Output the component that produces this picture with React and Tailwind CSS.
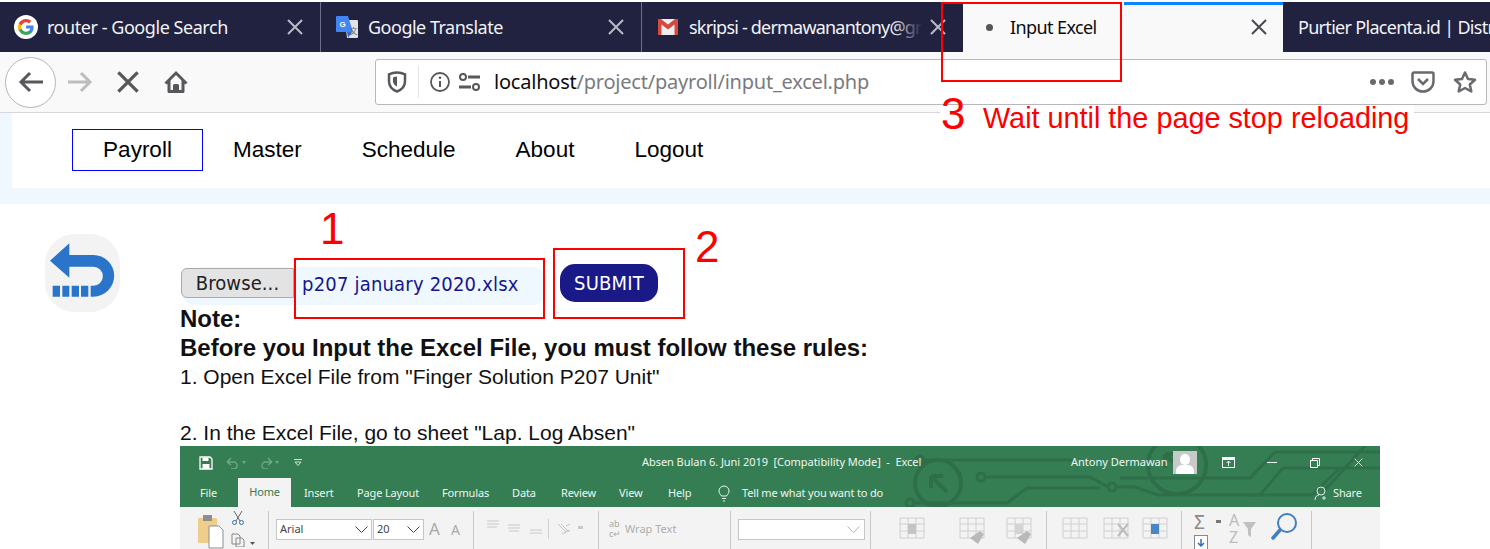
import React from "react";

const X = ({ c = "#b9bac6", s = 16, w = 2 }) => (
  <svg width={s} height={s} viewBox="0 0 16 16" className="shrink-0">
    <path d="M1 1L15 15M15 1L1 15" stroke={c} strokeWidth={w} fill="none" />
  </svg>
);

const GoogleG = () => (
  <svg width="24" height="24" viewBox="0 0 24 24" className="shrink-0">
    <circle cx="12" cy="12" r="12" fill="#fff" />
    <path d="M19.6 12.2c0-.6-.1-1.100-.2-1.600H12v3h4.300c-.2 1-.8 1.800-1.600 2.400v2h2.600c1.500-1.400 2.300-3.400 2.300-5.800z" fill="#4285f4" />
    <path d="M12 20c2.200 0 4-.7 5.300-2l-2.600-2c-.7.500-1.600.8-2.700.8-2.100 0-3.900-1.400-4.500-3.300H4.800v2.100C6.100 18.200 8.900 20 12 20z" fill="#34a853" />
    <path d="M7.500 13.500c-.3-1-.3-2 0-3V8.400H4.800c-1.100 2.200-1.100 5 0 7.200z" fill="#fbbc05" />
    <path d="M12 7.200c1.200 0 2.200.4 3.100 1.200l2.300-2.300C16 4.800 14.200 4 12 4 8.900 4 6.100 5.800 4.800 8.400l2.700 2.100c.6-1.900 2.400-3.300 4.500-3.300z" fill="#ea4335" />
  </svg>
);

const TranslateIcon = () => (
  <svg width="22" height="22" viewBox="0 0 22 22" className="shrink-0">
    <path d="M9 4h12a1 1 0 0 1 1 1v16a1 1 0 0 1-1 1H11z" fill="#e3e3e3" />
    <path d="M1 0h11l5 16H1a1 1 0 0 1-1-1V1a1 1 0 0 1 1-1z" fill="#4285f4" />
    <path d="M11 16l1 6 4-6z" fill="#3367d6" />
    <text x="3.500" y="11" fontSize="8" fontWeight="700" fill="#fff" fontFamily="'Liberation Sans', sans-serif">G</text>
    <text x="13.500" y="18" fontSize="8" fill="#666" fontFamily="'Noto Sans CJK SC', sans-serif">文</text>
  </svg>
);

const GmailIcon = () => (
  <svg width="20" height="16" viewBox="0 0 20 16" className="shrink-0">
    <rect width="20" height="16" fill="#eeeeee" />
    <path d="M0 0h3l7 5.500L17 0h3v16h-3.500V5.500L10 10.500 3.500 5.500V16H0z" fill="#d44a3e" />
  </svg>
);

function Tab({ w, icon, title, fade, divider, tracking = "tracking-[-0.5px]" }) {
  return (
    <div className={`relative flex items-center h-full shrink-0 ${w} ${divider ? "border-r border-[#6c6e86]" : ""}`}>
      <div className="ml-[14px] w-[24px] flex justify-center shrink-0">{icon}</div>
      <div className={`relative ml-[9px] flex-1 overflow-hidden whitespace-nowrap text-[18px] text-[#f2f3f7] ${tracking} pt-[1px]`}>
        {title}
        {fade && <div className="absolute right-0 top-0 h-full w-[30px] bg-gradient-to-r from-transparent to-[#20223f]" />}
      </div>
      <div className="ml-[8px] mr-[17px] shrink-0"><X /></div>
    </div>
  );
}

const ToolIcon = ({ children, w = 24, h = 24, className = "" }) => (
  <svg width={w} height={h} viewBox={`0 0 ${w} ${h}`} fill="none" className={`shrink-0 ${className}`}>{children}</svg>
);

function ExcelCircuit() {
  const c = "#2e6f4a";
  return (
    <svg width="480" height="61" viewBox="900 446 480 61" fill="none" className="absolute right-0 top-0" stroke={c} strokeWidth="3">
      <path d="M924 460H1075" />
      <circle cx="920" cy="460" r="4" />
      <circle cx="938" cy="483" r="23" strokeWidth="4" />
      <path d="M931 476h12M931 476v12M932 477l15 15" strokeWidth="4" />
      <circle cx="981" cy="477" r="4" />
      <path d="M985 477H1090L1108 487" />
      <circle cx="1112" cy="487" r="4" />
      <path d="M1116 487H1135L1158 495H1260L1283 468H1380" />
      <path d="M915 503H1007L1027 488H1100" />
      <circle cx="910" cy="503" r="4" />
      <circle cx="1177" cy="465" r="29" strokeWidth="4" />
      <path d="M1165 454h14M1165 454v14M1166 455l18 18" strokeWidth="4" />
      <path d="M1120 478H1250L1275 452H1380" />
      <path d="M1340 468L1312 495H1250M1365 446L1325 490" />
    </svg>
  );
}

function ExcelTitleRow() {
  return (
    <div className="flex items-center h-[33px] text-[11px] text-[#f1f6f3]">
      <ToolIcon w={14} h={14} className="ml-[19px]">
        <path d="M1 1h10l2 2v10H1z" stroke="#fff" strokeWidth="1.300" />
        <rect x="3.500" y="1.500" width="6" height="3.500" fill="#fff" />
        <rect x="3.500" y="8" width="7" height="5" fill="#fff" />
      </ToolIcon>
      <ToolIcon w={14} h={12} className="ml-[13px]">
        <path d="M1 5h8a4 4 0 0 1 0 7H5M1 5l4-4M1 5l4 3" stroke="#6da98a" strokeWidth="1.300" />
      </ToolIcon>
      <ToolIcon w={4} h={3} className="ml-[2px]"><path d="M0 0h4L2 3z" fill="#6da98a" /></ToolIcon>
      <ToolIcon w={14} h={12} className="ml-[13px]">
        <path d="M13 5H5a4 4 0 0 0 0 7h4M13 5L9 1M13 5L9 8" stroke="#6da98a" strokeWidth="1.300" />
      </ToolIcon>
      <ToolIcon w={4} h={3} className="ml-[2px]"><path d="M0 0h4L2 3z" fill="#6da98a" /></ToolIcon>
      <ToolIcon w={8} h={7} className="ml-[15px]"><path d="M0 .5h8M1 3h6L4 6.500z" stroke="#cfe0d6" strokeWidth="1" /></ToolIcon>
      <div className="ml-[340px] whitespace-pre w-[276px] tracking-[-0.05px]">Absen Bulan 6. Juni 2019  [Compatibility Mode]  -  Excel</div>
      <div className="ml-[153px] w-[93px] whitespace-nowrap">Antony Dermawan</div>
      <div className="ml-[9px] w-[24px] h-[23px] bg-[#c9c9c9] overflow-hidden relative">
        <div className="absolute left-[7px] top-[3px] w-[10px] h-[11px] rounded-full bg-white" />
        <div className="absolute left-[3px] top-[14px] w-[18px] h-[12px] rounded-t-[6px] bg-white" />
      </div>
      <ToolIcon w={13} h={11} className="ml-[25px]">
        <rect x=".5" y=".5" width="12" height="10" stroke="#fff" />
        <rect x="1" y="1" width="11" height="2" fill="#fff" />
        <path d="M6.500 9V4M4.500 6l2-2 2 2" stroke="#fff" />
      </ToolIcon>
      <div className="ml-[32px] w-[10px] h-[1px] bg-white" />
      <ToolIcon w={10} h={10} className="ml-[33px]">
        <path d="M.5 2.500h7v7h-7zM2.500 2.500v-2h7v7h-2" stroke="#fff" />
      </ToolIcon>
      <div className="ml-[34px]"><X c="#fff" s={9} w={1.300} /></div>
    </div>
  );
}

function ExcelTabs() {
  const items = [
    ["File", "ml-[20px] w-[18px]"],
    ["Insert", "ml-[13px] w-[28px]"],
    ["Page Layout", "ml-[25px] w-[60px]"],
    ["Formulas", "ml-[25px] w-[46px]"],
    ["Data", "ml-[24px] w-[24px]"],
    ["Review", "ml-[25px] w-[33px]"],
    ["View", "ml-[25px] w-[24px]"],
    ["Help", "ml-[25px] w-[22px]"],
  ];
  return (
    <div className="flex items-end h-[28px] text-[11px] tracking-[-0.15px] text-[#eef5f0]">
      <div className={`${items[0][1]} h-[28px] flex items-center whitespace-nowrap`}>File</div>
      <div className="ml-[20px] w-[53px] h-[29px] bg-[#f3f3f3] text-[#37794f] flex items-center justify-center">Home</div>
      {items.slice(1).map(([t, cls]) => (
        <div key={t} className={`${cls} h-[28px] flex items-center whitespace-nowrap`}>{t}</div>
      ))}
      <div className="h-[28px] flex items-center ml-[28px]">
        <ToolIcon w={12} h={17}>
          <path d="M3.500 11C2 9 1 8 1 6a5 5 0 0 1 10 0c0 2-1 3-2.500 5zM4 13.500h4M5 16h2" stroke="#eef5f0" />
        </ToolIcon>
      </div>
      <div className="h-[28px] flex items-center ml-[12px] w-[142px] whitespace-nowrap">Tell me what you want to do</div>
      <div className="h-[28px] flex items-center ml-[430px]">
        <ToolIcon w={14} h={15}>
          <circle cx="7" cy="5" r="4" stroke="#dfeae3" />
          <path d="M1 14c0-3 2-5 4-5M10 10v4M8 12h4" stroke="#dfeae3" />
        </ToolIcon>
      </div>
      <div className="h-[28px] flex items-center ml-[5px] whitespace-nowrap">Share</div>
    </div>
  );
}

const Sep = ({ ml }) => <div className={`${ml} w-[1px] h-[42px] bg-[#c8c8c8] shrink-0`} />;

const Grid = ({ accent, deleted, ins }) => (
  <ToolIcon w={28} h={30}>
    <path d="M2 2h24v20H2zM2 8h24M2 15h24M10 2v20M18 2v20" stroke="#d0d0d0" />
    {accent && <rect x="10" y="8" width="8" height="10" fill={accent} />}
    {ins && <path d="M12 22l8 6 6-10-4-3z" fill="#b9b9b9" />}
    {deleted && <path d="M16 8l10 12M26 8L16 20" stroke="#bbb" strokeWidth="2" />}
  </ToolIcon>
);

function ExcelRibbon() {
  return (
    <div className="flex items-start h-[42px] bg-[#f3f3f3] overflow-hidden text-[11px] text-[#666] pt-[4px]">
      <ToolIcon w={27} h={34} className="ml-[17px] mt-[4px]">
        <rect x="1" y="3" width="19" height="25" rx="1" fill="#efcd8b" />
        <rect x="6" y="0" width="9" height="6" fill="#8e8e8e" />
        <path d="M12 11h10l4 4v18H12z" fill="#fff" stroke="#8e8e8e" />
      </ToolIcon>
      <div className="ml-[7px] w-[14px] flex flex-col gap-[8px] shrink-0">
        <ToolIcon w={14} h={14}>
          <path d="M3 0l6 10M11 0L5 10" stroke="#666" />
          <circle cx="3.500" cy="11.500" r="2" stroke="#2a6fb5" />
          <circle cx="10.500" cy="11.500" r="2" stroke="#2a6fb5" />
        </ToolIcon>
        <ToolIcon w={14} h={14}>
          <path d="M1 1h6l2 2v8H1zM5 5h6l2 2v7H5z" stroke="#888" fill="#f3f3f3" />
        </ToolIcon>
      </div>
      <ToolIcon w={5} h={3} className="ml-[5px] mt-[31px]"><path d="M0 0h5L2.500 3z" fill="#555" /></ToolIcon>
      <Sep ml="ml-[13px]" />
      <div className="ml-[7px] mt-[8px] w-[96px] h-[21px] bg-white border border-[#c6c6c6] flex items-center justify-between pl-[3px] pr-[3px] text-[#444] shrink-0">
        Arial
        <ToolIcon w={13} h={7}><path d="M.5 .5l6 6 6-6" stroke="#444" /></ToolIcon>
      </div>
      <div className="ml-[1px] mt-[8px] w-[51px] h-[21px] bg-white border border-[#c6c6c6] flex items-center justify-between pl-[3px] pr-[3px] text-[#444] shrink-0">
        20
        <ToolIcon w={13} h={7}><path d="M.5 .5l6 6 6-6" stroke="#444" /></ToolIcon>
      </div>
      <div className="ml-[5px] mt-[7px] w-[16px] text-[17px] leading-[22px] text-[#a9a9a9]">A</div>
      <div className="ml-[6px] mt-[9px] w-[16px] text-[14px] leading-[20px] text-[#a9a9a9]">A</div>
      <Sep ml="ml-[6px]" />
      <ToolIcon w={56} h={16} className="ml-[12px] mt-[9px]">
        <path d="M1 1h12M1 4h12M1 7h10M22 5h12M22 8h12M23 11h10M44 10h12M44 13h12" stroke="#c9c9c9" />
      </ToolIcon>
      <div className="ml-[6px] mt-[8px] w-[1px] h-[20px] bg-[#d0d0d0]" />
      <ToolIcon w={14} h={12} className="ml-[8px] mt-[12px]">
        <path d="M1 1l8 8M4 1l8 8M9 3l4-2M5 11l8-4" stroke="#c2c2c2" />
      </ToolIcon>
      <div className="ml-[7px] mt-[15px] w-[5px] h-[3px] bg-[#c9c9c9] shrink-0" />
      <Sep ml="ml-[15px]" />
      <div className="ml-[10px] mt-[8px] w-[13px] text-[9px] leading-[10px] text-[#aaa]">ab<br />c↵</div>
      <div className="ml-[3px] w-[98px] flex flex-col shrink-0">
        <div className="mt-[10px] text-[#aeaeae] whitespace-nowrap">Wrap Text</div>
        <div className="mt-[12px] -ml-[23px] w-[121px] h-[2px] bg-[#c8c8c8]" />
      </div>
      <Sep ml="ml-[7px]" />
      <div className="ml-[7px] mt-[8px] w-[127px] h-[21px] bg-white border border-[#c6c6c6] flex items-center justify-end pr-[4px] shrink-0">
        <ToolIcon w={13} h={7}><path d="M.5 .5l6 6 6-6" stroke="#b5b5b5" /></ToolIcon>
      </div>
      <Sep ml="ml-[5px]" />
      <div className="ml-[27px] mt-[5px]"><Grid accent="#c4c4c4" /></div>
      <div className="ml-[32px] mt-[5px]"><Grid ins /></div>
      <div className="ml-[19px] mt-[5px]"><Grid accent="#d4d4d4" ins /></div>
      <Sep ml="ml-[13px]" />
      <div className="ml-[14px] mt-[5px]"><Grid /></div>
      <div className="ml-[13px] mt-[5px]"><Grid deleted /></div>
      <div className="ml-[11px] mt-[5px]"><Grid accent="#4a86c4" /></div>
      <Sep ml="ml-[12px]" />
      <div className="ml-[12px] flex flex-col w-[14px] shrink-0">
        <div className="text-[19px] leading-[22px] text-[#8a8a8a]">Σ</div>
        <ToolIcon w={14} h={16} className="mt-[2px]">
          <rect x=".5" y=".5" width="13" height="15" fill="#fff" stroke="#888" />
          <path d="M7 4v7M4 8l3 3 3-3" stroke="#2a6fb5" strokeWidth="1.500" />
        </ToolIcon>
      </div>
      <div className="ml-[8px] mt-[9px] w-[5px] h-[3px] bg-[#777] shrink-0" />
      <div className="ml-[8px] w-[12px] text-[16px] leading-[17px] text-[#bcbcbc] mt-[1px]">A<br />Z</div>
      <ToolIcon w={13} h={15} className="mt-[11px] ml-[2px]"><path d="M0 0h13L8 7v8L5 13V7z" fill="#c0c0c0" /></ToolIcon>
      <ToolIcon w={27} h={28} className="ml-[15px] mt-[1px]">
        <circle cx="16" cy="11" r="9" stroke="#3f7fc4" strokeWidth="2" />
        <path d="M9 18L2 26" stroke="#3f7fc4" strokeWidth="3.500" strokeLinecap="round" />
      </ToolIcon>
      <Sep ml="ml-[13px]" />
    </div>
  );
}

const Annot = ({ cls }) => <div className={`absolute border-2 border-[#ff0000] ${cls}`} />;

export default function App() {
  const nav = ["Master", "Schedule", "About", "Logout"];
  return (
    <div className="relative w-[1490px] h-[549px] overflow-hidden bg-white font-['Noto_Sans',sans-serif]">
      {/* tab strip */}
      <div className="h-[2px] bg-white" />
      <div className="flex h-[50px] bg-[#20223f] overflow-hidden">
        <Tab w="w-[321px]" icon={<GoogleG />} title="router - Google Search" divider tracking="tracking-[-0.45px]" />
        <Tab w="w-[321px]" icon={<TranslateIcon />} title="Google Translate" divider />
        <Tab w="w-[321px]" icon={<GmailIcon />} title="skripsi - dermawanantony@gmail.com" fade tracking="tracking-[-0.8px]" />
        <div className="relative w-[320px] h-full bg-[#f9f9fa] flex items-center shrink-0">
          <div className="absolute left-[161px] right-0 top-0 h-[3px] bg-[#0a84ff]" />
          <div className="ml-[23px] w-[7px] h-[7px] rounded-full bg-[#55565b]" />
          <div className="ml-[17px] flex-1 text-[18px] text-[#0c0c0d] tracking-[-0.6px] pt-[1px]">Input Excel</div>
          <div className="mr-[16px]"><X c="#4a4a4f" /></div>
        </div>
        <div className="ml-[15px] whitespace-nowrap self-center text-[18px] text-[#f2f3f7] tracking-[-0.7px] pt-[1px] shrink-0">Purtier Placenta.id | Distributor</div>
      </div>

      {/* toolbar */}
      <div className="flex items-center h-[61px] bg-[#f9f9fa] border-b border-[#d7d7db]">
        <div className="ml-[5px] w-[51px] h-[51px] rounded-full border border-[#b6b6b8] bg-white flex items-center justify-center shrink-0">
          <ToolIcon w={26} h={22}>
            <path d="M25 11H3M12 2L3 11l9 9" stroke="#58585c" strokeWidth="3" />
          </ToolIcon>
        </div>
        <ToolIcon w={26} h={22} className="ml-[11px]">
          <path d="M1 11h22M14 2l9 9-9 9" stroke="#bdbdbf" strokeWidth="3" />
        </ToolIcon>
        <div className="ml-[24px]"><X c="#58585c" s={22} w={2.400} /></div>
        <ToolIcon w={24} h={24} className="ml-[25px]">
          <path d="M12 1L.500 12.500 2.500 14.500 3.500 13.500V21.500A1.500 1.500 0 0 0 5 23H19a1.500 1.500 0 0 0 1.500-1.500V13.500l1 1 2-2zM6.500 10.500L12 5l5.500 5.500V20H15V15.500A1.500 1.500 0 0 0 13.500 14h-3A1.500 1.500 0 0 0 9 15.500V20H6.500z" fill="#58585c" />
        </ToolIcon>
        <div className="ml-[187px] h-[46px] w-[1112px] flex items-center bg-white border border-[#b8b8ba] rounded-[3px] shrink-0">
          <ToolIcon w={20} h={22} className="ml-[11px]">
            <path d="M10 1.500c3 0 6 .8 8 1.800v7c0 5-3.500 8.500-8 10.200-4.500-1.700-8-5.200-8-10.200v-7c2-1 5-1.800 8-1.800z" stroke="#58585c" strokeWidth="2.500" />
            <path d="M10 5.500v10c-2.500-1-4-3-4-5.500V6.500c1.300-.6 2.700-1 4-1z" fill="#58585c" />
          </ToolIcon>
          <div className="ml-[11px] w-[1px] h-[32px] bg-[#e4e4e6]" />
          <ToolIcon w={20} h={20} className="ml-[11px]">
            <circle cx="10" cy="10" r="9" stroke="#58585c" strokeWidth="1.800" />
            <circle cx="10" cy="5.800" r="1.300" fill="#58585c" />
            <path d="M10 9v6" stroke="#58585c" strokeWidth="2" />
          </ToolIcon>
          <ToolIcon w={21} h={18} className="ml-[9px]">
            <circle cx="4" cy="4" r="3" stroke="#58585c" strokeWidth="2" />
            <path d="M9 4h12M0 14h12" stroke="#58585c" strokeWidth="3" />
            <circle cx="17" cy="14" r="3" stroke="#58585c" strokeWidth="2" />
          </ToolIcon>
          <div className="ml-[14px] text-[20px] whitespace-nowrap tracking-[-0.22px] text-[#0c0c0d]">
            localhost<span className="text-[#7a7a80]">/project/payroll/input_excel.php</span>
          </div>
          <div className="flex-1" />
          <div className="flex gap-[3px] mr-[17px]">
            <div className="w-[6px] h-[6px] rounded-full bg-[#6a6a6e]" />
            <div className="w-[6px] h-[6px] rounded-full bg-[#6a6a6e]" />
            <div className="w-[6px] h-[6px] rounded-full bg-[#6a6a6e]" />
          </div>
          <ToolIcon w={24} h={22} className="mr-[18px]">
            <path d="M3 1.500h18a1.500 1.500 0 0 1 1.500 1.500v7c0 6-4.500 10.500-10.500 10.500S1.500 16 1.500 10V3A1.500 1.500 0 0 1 3 1.500z" stroke="#6a6a6e" strokeWidth="2.500" />
            <path d="M7 8l5 5 5-5" stroke="#6a6a6e" strokeWidth="2.500" />
          </ToolIcon>
          <ToolIcon w={24} h={24} className="mr-[9px]">
            <path d="M12 2.500l3 6.500 7 .8-5.200 4.700 1.500 7L12 18l-6.300 3.500 1.500-7L2 9.800 9 9z" stroke="#6a6a6e" strokeWidth="2.500" strokeLinejoin="round" />
          </ToolIcon>
        </div>
      </div>

      {/* page */}
      <div className="bg-[#f0f8ff] pl-[12px] pb-[16px] font-['Liberation_Sans',sans-serif]">
        <div className="h-[75px] bg-white pl-[60px] pt-[16px] flex items-start text-[22.500px] text-black">
          <div className="h-[42px] w-[131px] border border-[#0000ff] flex items-center justify-center">Payroll</div>
          {nav.map((n) => (
            <div key={n} className="h-[42px] px-[30px] flex items-center">{n}</div>
          ))}
        </div>
      </div>

      <div className="flex items-start pl-[45px] pt-[30px] bg-white">
        <div className="w-[75px] h-[78px] rounded-[30px] bg-[#f3f3f3] shrink-0">
          <svg width="75" height="78" viewBox="45 27 225 234">
            <path d="M60 107L118 55V90H190A62.500 62.500 0 0 1 190 215H182V182H190A28.500 28.500 0 0 0 190 125H118V158Z" fill="#2a74c9" />
            <path d="M68 182h22v33H68zM97 182h21v33H97zM125 182h22v33h-22zM153 182h22v33h-22z" fill="#2a74c9" />
          </svg>
        </div>
        <div className="ml-[60px] mt-[30px] w-[1200px] font-['Liberation_Sans',sans-serif] text-[#111]">
          <div className="flex items-start h-[41px] ml-[1px] font-['DejaVu_Sans_Condensed','Noto_Sans',sans-serif]">
            <div className="mt-[3px] w-[365px] h-[38px] bg-[#f0f8ff] rounded-[14px] flex items-start shrink-0">
              <div className="mt-[1px] w-[113px] h-[30px] bg-[#e3e3e3] border border-[#aaaaaa] rounded-l-[6px] rounded-r-none flex items-center justify-center text-[20px] text-[#222] tracking-[0.1px]">Browse...</div>
              <div className="ml-[8px] mt-[2px] text-[20px] text-[#16168b] tracking-[0.2px] whitespace-nowrap">p207 january 2020.xlsx</div>
            </div>
            <div className="ml-[14px] w-[98px] h-[38px] rounded-[15px] bg-[#191988] text-white text-[20px] flex items-center justify-center tracking-[0.2px]">SUBMIT</div>
          </div>
          <div className="text-[24px] leading-[28.500px] font-bold">Note:</div>
          <div className="text-[24px] leading-[28.500px] font-bold whitespace-nowrap">Before you Input the Excel File, you must follow these rules:</div>
          <div className="text-[21px] leading-[30px] whitespace-nowrap">1. Open Excel File from "Finger Solution P207 Unit"</div>
          <div className="h-[27px]" />
          <div className="text-[21px] leading-[27px] whitespace-nowrap">2. In the Excel File, go to sheet "Lap. Log Absen"</div>
          <div className="relative w-[1200px] font-['Noto_Sans',sans-serif]">
            <div className="relative bg-[#357e54] h-[61px]">
              <ExcelCircuit />
              <div className="relative"><ExcelTitleRow /><ExcelTabs /></div>
            </div>
            <ExcelRibbon />
          </div>
        </div>
      </div>

      {/* red annotations */}
      <Annot cls="left-[941px] top-[2px] w-[181px] h-[80px]" />
      <Annot cls="left-[294px] top-[258px] w-[251px] h-[61px]" />
      <Annot cls="left-[553px] top-[248px] w-[132px] h-[71px]" />
      <div className="absolute left-[940px] top-[105px] w-[474px] h-[31px] pl-[43px] pb-[5px] flex items-center bg-white text-[#ff0000] font-['Liberation_Sans',sans-serif] leading-none">
        <span className="text-[28.800px] whitespace-nowrap">Wait until the page stop reloading</span>
      </div>
      <div className="absolute left-[941px] top-[89px] text-[#ff0000] text-[44px] leading-[50px] font-['Liberation_Sans',sans-serif]">3</div>
      <div className="absolute left-[320px] top-[204px] text-[#ff0000] text-[44px] leading-[50px] font-['Liberation_Sans',sans-serif]">1</div>
      <div className="absolute left-[695px] top-[222px] text-[#ff0000] text-[44px] leading-[50px] font-['Liberation_Sans',sans-serif]">2</div>
    </div>
  );
}
